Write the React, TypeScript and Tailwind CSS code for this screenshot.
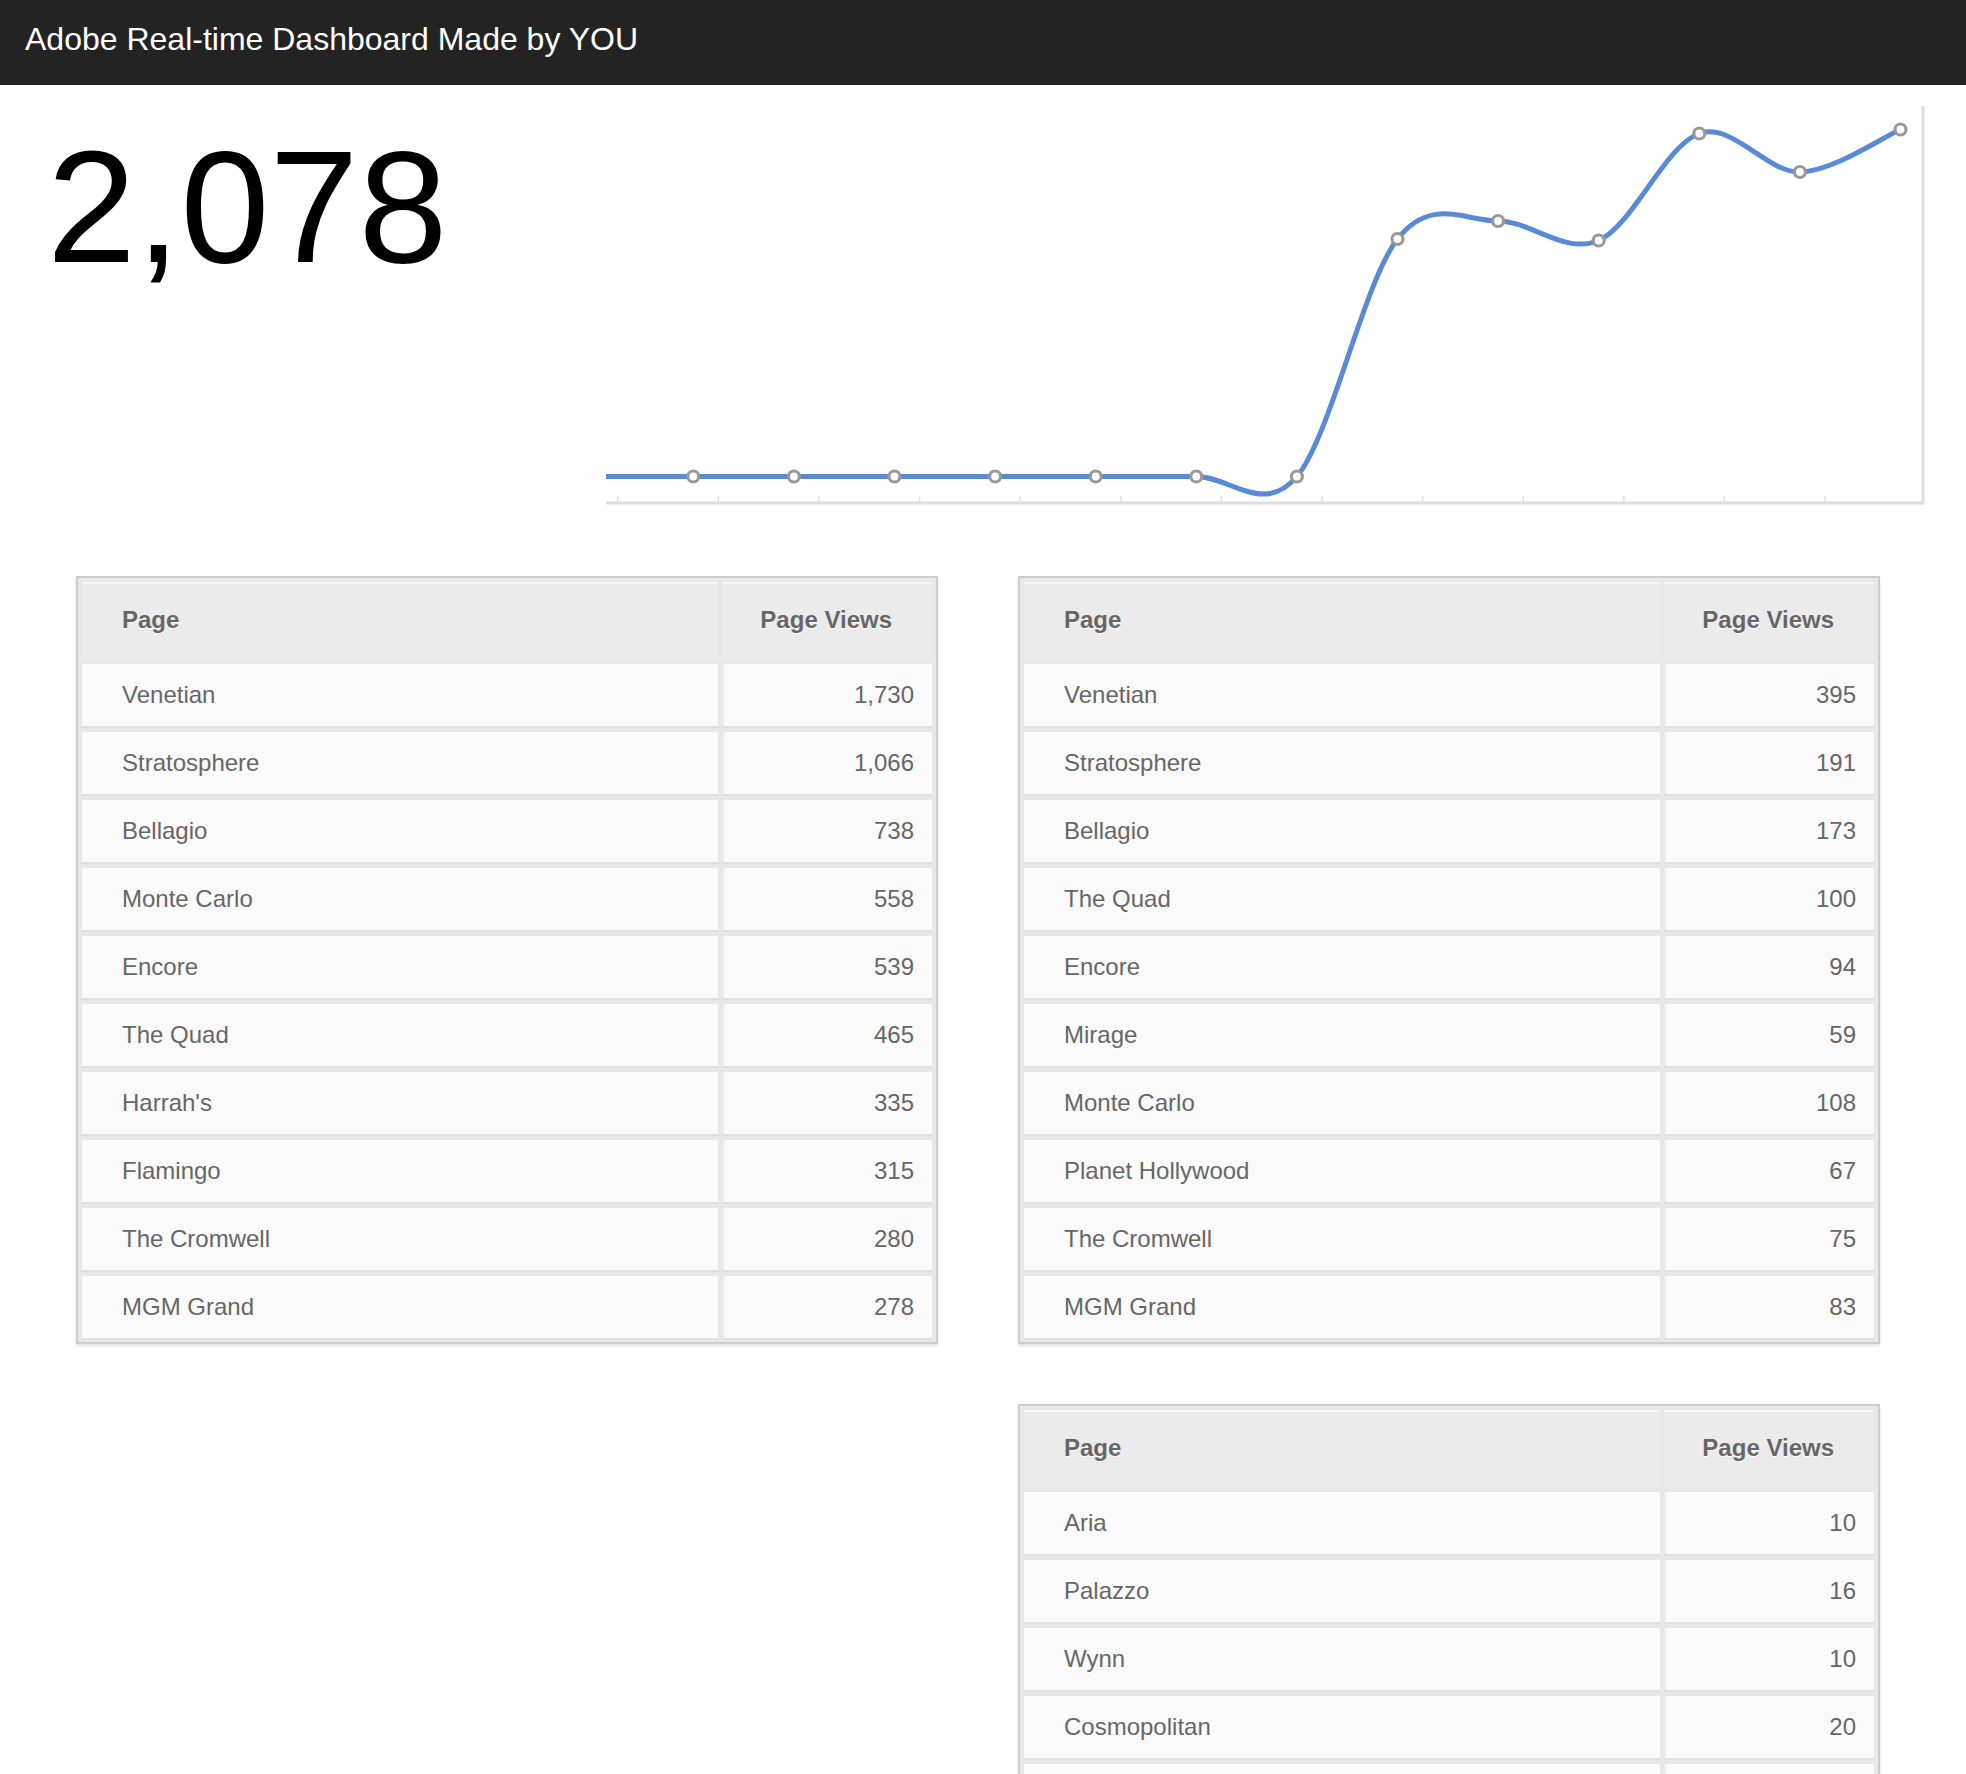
import React from "react";

const tableA = [
  { page: "Venetian", views: "1,730" },
  { page: "Stratosphere", views: "1,066" },
  { page: "Bellagio", views: "738" },
  { page: "Monte Carlo", views: "558" },
  { page: "Encore", views: "539" },
  { page: "The Quad", views: "465" },
  { page: "Harrah's", views: "335" },
  { page: "Flamingo", views: "315" },
  { page: "The Cromwell", views: "280" },
  { page: "MGM Grand", views: "278" },
];

const tableB = [
  { page: "Venetian", views: "395" },
  { page: "Stratosphere", views: "191" },
  { page: "Bellagio", views: "173" },
  { page: "The Quad", views: "100" },
  { page: "Encore", views: "94" },
  { page: "Mirage", views: "59" },
  { page: "Monte Carlo", views: "108" },
  { page: "Planet Hollywood", views: "67" },
  { page: "The Cromwell", views: "75" },
  { page: "MGM Grand", views: "83" },
];

// last row only shows its top edge in the frame
const tableC = [
  { page: "Aria", views: "10" },
  { page: "Palazzo", views: "16" },
  { page: "Wynn", views: "10" },
  { page: "Cosmopolitan", views: "20" },
  { page: "", views: "" },
];

// chart points in page coordinates
const step = 100.6;
const ys = [476.5, 476.5, 476.5, 476.5, 476.5, 476.5, 476.5, 239, 221, 240.5, 133.5, 172, 129.5];
const points = ys.map((y, i) => [693.3 + step * i, y]);
const linePts = [[693.3 - step * 2, 476.5], [693.3 - step, 476.5], ...points];

function curve(p: number[][]) {
  let d = `M${p[0][0]},${p[0][1]}`;
  for (let i = 0; i < p.length - 1; i++) {
    const p0 = p[i - 1] || p[i];
    const p1 = p[i];
    const p2 = p[i + 1];
    const p3 = p[i + 2] || p[i + 1];
    const c1x = p1[0] + (p2[0] - p0[0]) / 6;
    const c1y = p1[1] + (p2[1] - p0[1]) / 6;
    const c2x = p2[0] - (p3[0] - p1[0]) / 6;
    const c2y = p2[1] - (p3[1] - p1[1]) / 6;
    d += ` C${c1x},${c1y} ${c2x},${c2y} ${p2[0]},${p2[1]}`;
  }
  return d;
}

function Chart() {
  const ticks = Array.from({ length: 13 }, (_, k) => 617.8 + step * k);
  return (
    <svg width="1340" height="430" viewBox="600 85 1340 430" className="shrink-0">
      <defs>
        <clipPath id="plot">
          <rect x="606" y="90" width="1320" height="420" />
        </clipPath>
      </defs>
      <line x1="606" y1="503" x2="1924" y2="503" stroke="#dddddd" strokeWidth="3" />
      <line x1="1923" y1="106" x2="1923" y2="504.5" stroke="#dddddd" strokeWidth="3" />
      {ticks.map((x) => (
        <line key={x} x1={x} y1="496" x2={x} y2="502" stroke="#e2e2e2" strokeWidth="1.5" />
      ))}
      <path d={curve(linePts)} fill="none" stroke="#588ad6" strokeWidth="5" clipPath="url(#plot)" />
      {points.map(([x, y]) => (
        <circle key={x} cx={x} cy={y} r="5.5" fill="#ffffff" stroke="#999999" strokeWidth="3.2" />
      ))}
    </svg>
  );
}

function StatsTable({ rows }: { rows: { page: string; views: string }[] }) {
  return (
    <div className="border-2 border-[#cccccc] bg-[#e8e8e8] shadow-[0_2px_3px_rgba(0,0,0,0.12)]">
      <table className="-mb-[2px] w-full border-separate border-spacing-[4px] text-[24px] text-[#666666] [text-shadow:0_1px_0_#ffffff]">
        <thead>
          <tr>
            <th className="h-[78px] bg-[#ebebeb] border-t-2 border-[#f7f7f7] pb-[4px] pl-[40px] text-left font-bold">
              Page
            </th>
            <th className="h-[78px] w-[210px] bg-[#ebebeb] border-t-2 border-[#f7f7f7] pb-[4px] pr-[40px] text-right font-bold">
              Page Views
            </th>
          </tr>
        </thead>
        <tbody>
          {rows.map((row, idx) => (
            <tr key={idx}>
              <td className="h-[64px] bg-[#fafafa] border-b-2 border-[#e0e0e0] pl-[40px]">{row.page}</td>
              <td className="h-[64px] bg-[#fafafa] border-b-2 border-[#e0e0e0] pr-[18px] text-right shadow-[inset_2px_0_0_#ececec]">
                {row.views}
              </td>
            </tr>
          ))}
        </tbody>
      </table>
    </div>
  );
}

export default function App() {
  return (
    <div className="min-h-screen bg-white font-['Liberation_Sans',Arial,sans-serif]">
      <header className="h-[85px] bg-[#232323] pl-[25px] pt-[23px]">
        <h1 className="text-[32px] leading-none text-white">Adobe Real-time Dashboard Made by YOU</h1>
      </header>

      <div className="flex h-[491px]">
        <div className="w-[600px] shrink-0 pl-[47px] pt-[42px]">
          <div className="text-[160px] leading-none text-black">2,078</div>
        </div>
        <Chart />
      </div>

      <div className="grid grid-cols-[862px_862px] gap-x-[80px] gap-y-[60px] pl-[76px] pb-[40px]">
        <StatsTable rows={tableA} />
        <StatsTable rows={tableB} />
        <div />
        <StatsTable rows={tableC} />
      </div>
    </div>
  );
}
